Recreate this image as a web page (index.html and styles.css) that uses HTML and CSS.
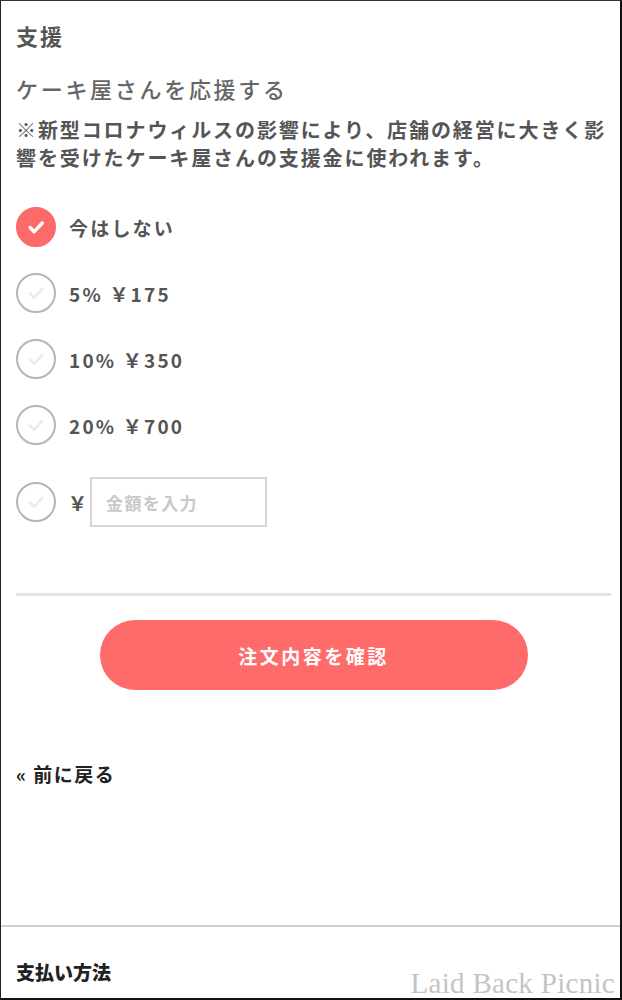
FILE: index.html
```html
<!DOCTYPE html>
<html lang="ja">
<head>
  <meta charset="UTF-8">
  <meta name="viewport" content="width=device-width, initial-scale=1.0">
  <title>支援</title>
  <link rel="stylesheet" href="styles.css">
</head>
<body>
  <div class="frame">
    <section class="support">
      <h2 class="section-title">支援</h2>
      <h3 class="support-title">ケーキ屋さんを応援する</h3>
      <p class="note">※新型コロナウィルスの影響により、店舗の経営に大きく影響を受けたケーキ屋さんの支援金に使われます。</p>

      <!-- Support amount options -->
      <ul class="options">
        <li class="option selected">
          <span class="radio"><svg viewBox="0 0 24 24"><path d="M6.5 12.5l3.8 3.8 7.5-8"/></svg></span>
          <span class="label">今はしない</span>
        </li>
        <li class="option">
          <span class="radio"><svg viewBox="0 0 24 24"><path d="M6.5 12.5l3.8 3.8 7.5-8"/></svg></span>
          <span class="label">5% ￥175</span>
        </li>
        <li class="option">
          <span class="radio"><svg viewBox="0 0 24 24"><path d="M6.5 12.5l3.8 3.8 7.5-8"/></svg></span>
          <span class="label">10% ￥350</span>
        </li>
        <li class="option">
          <span class="radio"><svg viewBox="0 0 24 24"><path d="M6.5 12.5l3.8 3.8 7.5-8"/></svg></span>
          <span class="label">20% ￥700</span>
        </li>
        <li class="option custom">
          <span class="radio"><svg viewBox="0 0 24 24"><path d="M6.5 12.5l3.8 3.8 7.5-8"/></svg></span>
          <span class="label">￥</span>
          <input type="text" class="amount" placeholder="金額を入力">
        </li>
      </ul>

      <hr class="divider">

      <div class="actions">
        <button class="confirm-btn">注文内容を確認</button>
      </div>

      <a class="back" href="#">« 前に戻る</a>
    </section>

    <section class="payment">
      <h2 class="payment-title">支払い方法</h2>
    </section>

    <div class="watermark">Laid Back Picnic</div>
  </div>
</body>
</html>
```

FILE: styles.css
```css
body {
  margin: 0;
  padding: 0;
  background-color: #fff;
  font-family: 'Noto Sans CJK JP', 'Noto Sans', sans-serif;
  color: #555;
}
.frame {
  position: relative;
  box-sizing: border-box;
  height: 1000px;
  border-top: 1px solid #333;
  border-left: 1px solid #222;
  border-right: 2px solid #111;
  border-bottom: 2px solid #111;
  overflow: hidden;
}
.support {
  padding: 0 9px 0 15px;
}
.section-title {
  margin: 20px 0 0;
  font-size: 22px;
  line-height: 28px;
  font-weight: bold;
  letter-spacing: 2px;
  color: #555;
}
.support-title {
  margin: 25px 0 0;
  font-size: 22px;
  line-height: 28px;
  font-weight: 500;
  letter-spacing: 2.7px;
  color: #666;
}
.note {
  margin: 14px 0 0;
  font-size: 20px;
  line-height: 28px;
  font-weight: bold;
  letter-spacing: 1.9px;
  color: #555;
}
.options {
  list-style: none;
  margin: 35px 0 0;
  padding: 0;
}
.option {
  display: flex;
  align-items: center;
  height: 40px;
  margin-bottom: 26px;
}
.option.custom {
  height: 50px;
  margin-top: 32px;
  margin-bottom: 0;
}
.radio {
  box-sizing: border-box;
  width: 40px;
  height: 40px;
  border-radius: 50%;
  border: 2px solid #b5b5b5;
  display: flex;
  align-items: center;
  justify-content: center;
  flex-shrink: 0;
}
.radio svg {
  width: 26px;
  height: 26px;
  fill: none;
  stroke: #ececec;
  stroke-width: 2.6;
  stroke-linecap: round;
  stroke-linejoin: round;
}
.option.selected .radio {
  background-color: #fd6a6a;
  border-color: #fd6a6a;
}
.option.selected .radio svg {
  stroke: #fff;
  stroke-width: 3.2;
}
.label {
  margin-left: 13px;
  font-size: 19px;
  font-weight: bold;
  letter-spacing: 2.2px;
  color: #555;
}
.custom .label {
  margin-left: 12px;
  letter-spacing: 0;
}
.amount {
  box-sizing: border-box;
  width: 177px;
  height: 50px;
  margin-left: 3px;
  padding: 0 14px;
  border: 2px solid #d6d6d6;
  border-radius: 0;
  font-family: inherit;
  font-size: 17px;
  font-weight: bold;
  letter-spacing: 1.4px;
  color: #555;
  outline: none;
}
.amount::placeholder {
  color: #c8c8c8;
}
.divider {
  margin: 66px 0 0;
  border: none;
  height: 3px;
  background-color: #e2e2e2;
}
.actions {
  display: flex;
  justify-content: center;
  margin-top: 24px;
}
.confirm-btn {
  width: 428px;
  height: 70px;
  border: none;
  border-radius: 35px;
  background-color: #ff6b6b;
  color: #fff;
  font-family: inherit;
  font-size: 19px;
  font-weight: bold;
  letter-spacing: 2.5px;
  cursor: pointer;
}
.back {
  display: block;
  margin-top: 70px;
  font-size: 19px;
  line-height: 28px;
  font-weight: bold;
  letter-spacing: 1.5px;
  color: #222;
  text-decoration: none;
}
.payment {
  margin-top: 137px;
  border-top: 2px solid #cfcfcf;
  padding: 0 15px;
}
.payment-title {
  margin: 31px 0 0;
  font-size: 19px;
  line-height: 28px;
  font-weight: 900;
  color: #222;
}
.watermark {
  position: absolute;
  right: 5px;
  bottom: 0;
  font-family: 'Liberation Serif', serif;
  font-size: 29px;
  line-height: 30px;
  letter-spacing: 0.3px;
  color: #c4c4c4;
}
```
